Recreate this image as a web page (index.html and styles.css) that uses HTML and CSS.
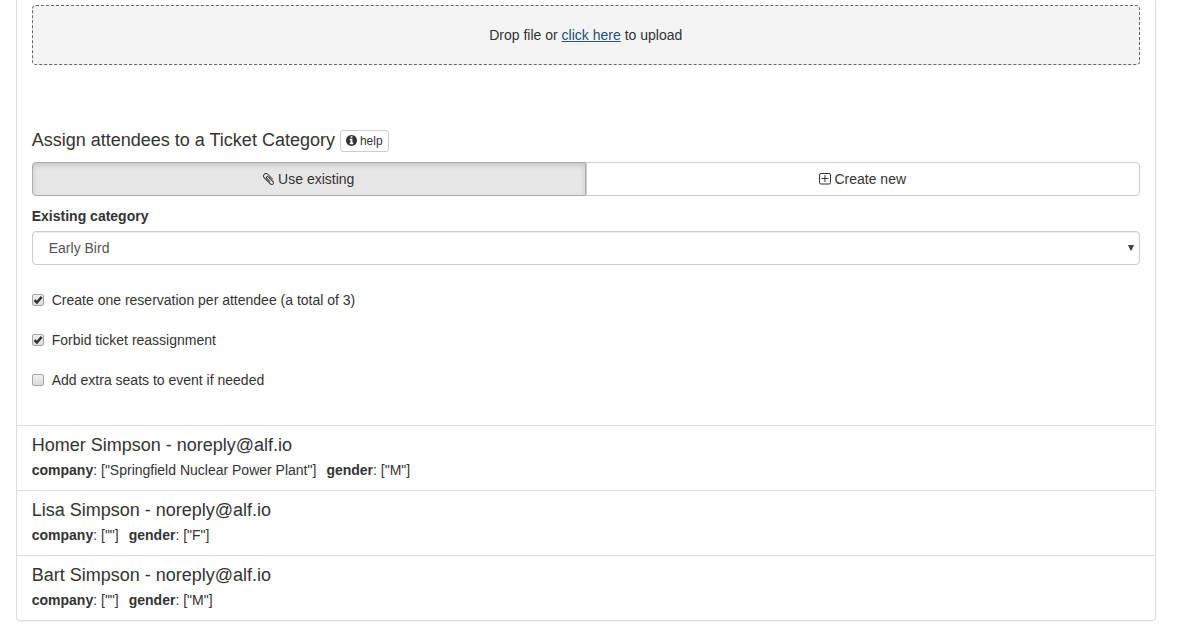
FILE: index.html
```html
<!DOCTYPE html>
<html lang="en">
<head>
<meta charset="utf-8">
<title>Upload attendees</title>
<link rel="stylesheet" href="styles.css">
</head>
<body>
<div class="panel">
  <div class="panel-body">
    <div class="drop-file">Drop file or&nbsp;<a class="link" href="#">click here</a>&nbsp;to upload</div>
    <h4 class="heading"><span class="heading-text">Assign attendees to a Ticket Category</span>
      <button class="btn-help" type="button"><svg class="icon-info" viewBox="128 128 1536 1536"><path d="M1152 1376v-160q0-14-9-23t-23-9h-96v-512q0-14-9-23t-23-9h-320q-14 0-23 9t-9 23v160q0 14 9 23t23 9h96v320h-96q-14 0-23 9t-9 23v160q0 14 9 23t23 9h448q14 0 23-9t9-23zm-128-896v-160q0-14-9-23t-23-9h-192q-14 0-23 9t-9 23v160q0 14 9 23t23 9h192q14 0 23-9t9-23zm640 416q0 209-103 385.5t-279.5 279.5-385.5 103-385.5-103-279.5-279.5-103-385.5 103-385.5 279.5-279.5 385.5-103 385.5 103 279.5 279.5 103 385.5z"/></svg>help</button>
    </h4>
    <div class="btn-group">
      <button class="btn btn-left active" type="button"><svg class="icon-clip" viewBox="192 128 1408 1536"><path d="M1596 1385q0 117-79 196t-196 79q-135 0-235-100l-777-776q-113-115-113-271 0-159 110-270t269-111q158 0 273 113l605 606q10 10 10 22 0 16-30.500 46.500t-46.500 30.500q-13 0-23-10l-606-607q-79-77-181-77-106 0-179 75t-73 181q0 105 76 181l776 777q63 63 145 63 64 0 106-42t42-106q0-82-63-145l-581-581q-26-24-60-24-29 0-48 19t-19 48q0 32 25 59l410 410q10 10 10 22 0 16-31 47t-47 31q-12 0-22-10l-410-410q-63-61-63-149 0-82 57-139t139-57q88 0 149 63l581 581q100 98 100 235z"/></svg>Use existing</button>
      <button class="btn btn-right" type="button"><svg class="icon-plus" viewBox="0 0 12 12"><rect x=".5" y=".5" width="11" height="10.500" rx="1.500"/><path d="M2.500 5.500h7M6 2v7"/></svg>Create new</button>
    </div>
    <div class="label">Existing category</div>
    <div class="select"><span>Early Bird</span><svg class="caret" viewBox="0 0 6 6"><path d="M0 0h6L3.500 5.500h-1z"/></svg></div>
    <label class="check"><span class="box"><svg class="tick" viewBox="0 0 12 12"><path d="M2.500 6.200L4.900 8.500L9.700 2.900"/></svg></span>Create one reservation per attendee (a total of 3)</label>
    <label class="check"><span class="box"><svg class="tick" viewBox="0 0 12 12"><path d="M2.500 6.200L4.900 8.500L9.700 2.900"/></svg></span>Forbid ticket reassignment</label>
    <label class="check"><span class="box"></span>Add extra seats to event if needed</label>
  </div>
  <div class="item">
    <h4 class="name">Homer Simpson - noreply@alf.io</h4>
    <p class="details"><span><b>company</b>: ["Springfield Nuclear Power Plant"]</span><span><b>gender</b>: ["M"]</span></p>
  </div>
  <div class="item">
    <h4 class="name">Lisa Simpson - noreply@alf.io</h4>
    <p class="details"><span><b>company</b>: [""]</span><span><b>gender</b>: ["F"]</span></p>
  </div>
  <div class="item">
    <h4 class="name">Bart Simpson - noreply@alf.io</h4>
    <p class="details"><span><b>company</b>: [""]</span><span><b>gender</b>: ["M"]</span></p>
  </div>
</div>
</body>
</html>
```
FILE: styles.css
```css
* { box-sizing: border-box; }
body {
  margin: 0;
  padding: 0 21.250px 14px 15.750px;
  background: #fff;
  color: #333;
  font: 14px/20px "Liberation Sans", Arial, sans-serif;
}
.panel {
  border: 1px solid #ddd;
  border-top: 0;
  border-radius: 0 0 4px 4px;
  box-shadow: 0 1px 1px rgba(0, 0, 0, .05);
}
.panel-body { height: 425px; padding: 5px 15px 0; }
.drop-file {
  display: flex;
  align-items: center;
  justify-content: center;
  height: 60px;
  border: 1px dashed #666;
  border-radius: 4px;
  background: #f4f4f4;
}
.link { color: #23527c; text-decoration: underline; }
.heading {
  display: flex;
  align-items: center;
  gap: 5px;
  height: 22px;
  margin: 65px 0 10px;
  font-size: 18px;
  font-weight: 500;
}
.heading-text { padding-bottom: 2px; }
.btn-help {
  display: flex;
  align-items: center;
  gap: 3px;
  height: 22px;
  padding: 0 5px;
  border: 1px solid #ccc;
  border-radius: 3px;
  background: #fff;
  color: #333;
  font: 12px/18px "Liberation Sans", Arial, sans-serif;
}
.icon-info { width: 11px; height: 11px; margin-bottom: 1px; fill: #333; }
.btn-group { display: flex; height: 34px; }
.btn {
  display: flex;
  align-items: center;
  justify-content: center;
  flex: 1 1 0;
  gap: 4px;
  padding: 0;
  border: 1px solid #ccc;
  background: #fff;
  color: #333;
  font: 14px/20px "Liberation Sans", Arial, sans-serif;
}
.btn-left { border-radius: 4px 0 0 4px; }
.btn-right { gap: 3px; border-radius: 0 4px 4px 0; }
.active {
  border-color: #adadad;
  background: #e6e6e6;
  box-shadow: inset 0 3px 5px rgba(0, 0, 0, .125);
}
.icon-clip { width: 11px; height: 12px; fill: #333; }
.icon-plus { width: 12px; height: 12px; fill: none; stroke: #333; stroke-width: 1; }
.label { margin: 10px 0 5px; font-weight: 700; }
.select {
  display: flex;
  align-items: center;
  justify-content: space-between;
  height: 34px;
  margin-bottom: 25px;
  padding: 0 5px 0 16px;
  border: 1px solid #ccc;
  border-radius: 4px;
  box-shadow: inset 0 1px 1px rgba(0, 0, 0, .075);
  color: #555;
}
.caret { width: 6px; height: 6px; fill: #444; }
.check { display: flex; align-items: center; gap: 8px; margin-bottom: 20px; }
.box {
  width: 12px;
  height: 12px;
  border: 1px solid #a6a6a6;
  border-radius: 2px;
  background: linear-gradient(#eee, #dcdcdc);
}
.tick { display: block; width: 12px; height: 12px; margin: -1px; fill: none; stroke: #333; stroke-width: 2.5; }
.item { height: 65px; padding: 9px 15px 0; border-top: 1px solid #ddd; }
.name { margin: 0 0 5px; font-size: 18px; font-weight: 500; line-height: 20px; }
.details { display: flex; gap: 10px; margin: 0; }
```
